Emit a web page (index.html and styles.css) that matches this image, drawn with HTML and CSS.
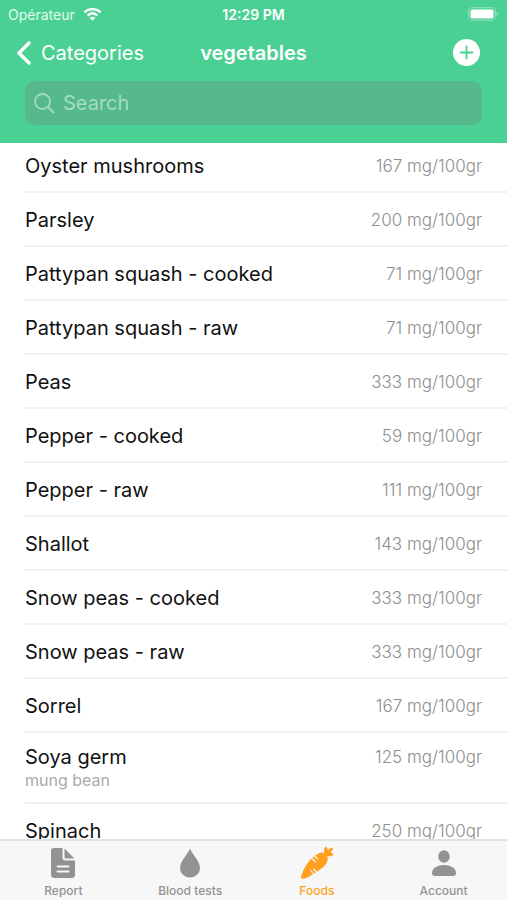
FILE: index.html
```
<!DOCTYPE html>
<html lang="en">
<head>
    <meta charset="UTF-8">
    <meta name="viewport" content="width=device-width, initial-scale=1.0">
    <title>vegetables</title>
    <link rel="stylesheet" href="styles.css">
</head>
<body>
    <div class="app">
        <header class="header">
            <div class="status-bar">
                <div class="carrier">
                    <span>Opérateur</span>
                    <svg class="wifi" viewBox="0 0 20 14" aria-hidden="true">
                        <path d="M1.500 5.200C6 0.800 14 0.800 18.500 5.200M4.800 8.600C8 5.800 12 5.800 15.200 8.600" fill="none" stroke="currentColor" stroke-width="2.500"/>
                        <path d="M10 14L7 11C8.700 9.600 11.300 9.600 13 11Z" fill="currentColor"/>
                    </svg>
                </div>
                <span class="clock">12:29 PM</span>
                <svg class="battery" viewBox="0 0 31 14" aria-hidden="true">
                    <rect x="0.700" y="0.700" width="26.600" height="12.600" rx="4" fill="none" stroke="#fff" stroke-opacity="0.350" stroke-width="1.300"/>
                    <rect x="2.500" y="2.500" width="23" height="9" rx="2" fill="#fff"/>
                    <path d="M28.500 5v4c2-.7 2-3.300 0-4z" fill="#fff" fill-opacity="0.400"/>
                </svg>
            </div>

            <nav class="nav-bar">
                <a href="#" class="back">
                    <svg class="chevron" viewBox="0 0 14 24" aria-hidden="true">
                        <path d="M12 2L2 12L12 22" fill="none" stroke="currentColor" stroke-width="3.300" stroke-linecap="round" stroke-linejoin="round"/>
                    </svg>
                    <span>Categories</span>
                </a>
                <h1 class="title">vegetables</h1>
                <button class="add-btn" type="button" aria-label="Add">
                    <svg viewBox="0 0 27 27" aria-hidden="true">
                        <circle cx="13.500" cy="13.500" r="13.500" fill="#fff"/>
                        <path d="M13.500 7.500v12M7.500 13.500h12" stroke="#4bd093" stroke-width="1.800" stroke-linecap="round"/>
                    </svg>
                </button>
            </nav>

            <label class="search">
                <svg class="search-icon" viewBox="0 0 21 21" aria-hidden="true">
                    <path d="M14 14L19.500 19.500" stroke="currentColor" stroke-width="2" stroke-linecap="round"/>
                    <circle cx="8.500" cy="8.500" r="7.500" fill="none" stroke="currentColor" stroke-width="1.800"/>
                </svg>
                <input type="search" class="search-input" placeholder="Search" aria-label="Search">
            </label>
        </header>

        <main class="content">
            <ul class="food-list">
                <li class="food"><span class="name">Oyster mushrooms</span><span class="amount">167 mg/100gr</span></li>
                <li class="food"><span class="name">Parsley</span><span class="amount">200 mg/100gr</span></li>
                <li class="food"><span class="name">Pattypan squash - cooked</span><span class="amount">71 mg/100gr</span></li>
                <li class="food"><span class="name">Pattypan squash - raw</span><span class="amount">71 mg/100gr</span></li>
                <li class="food"><span class="name">Peas</span><span class="amount">333 mg/100gr</span></li>
                <li class="food"><span class="name">Pepper - cooked</span><span class="amount">59 mg/100gr</span></li>
                <li class="food"><span class="name">Pepper - raw</span><span class="amount">111 mg/100gr</span></li>
                <li class="food"><span class="name">Shallot</span><span class="amount">143 mg/100gr</span></li>
                <li class="food"><span class="name">Snow peas - cooked</span><span class="amount">333 mg/100gr</span></li>
                <li class="food"><span class="name">Snow peas - raw</span><span class="amount">333 mg/100gr</span></li>
                <li class="food"><span class="name">Sorrel</span><span class="amount">167 mg/100gr</span></li>
                <li class="food with-note">
                    <div>
                        <div class="name">Soya germ</div>
                        <div class="note">mung bean</div>
                    </div>
                    <span class="amount">125 mg/100gr</span>
                </li>
                <li class="food"><span class="name">Spinach</span><span class="amount">250 mg/100gr</span></li>
            </ul>
        </main>

        <nav class="tab-bar">
            <a href="#" class="tab">
                <svg class="tab-icon" viewBox="0 0 34 34" aria-hidden="true">
                    <path d="M8 2h8.500v9.500a3 3 0 0 0 3 3H29V28.500a3.500 3.500 0 0 1-3.500 3.500H8.500A3.500 3.500 0 0 1 5 28.500V5a3 3 0 0 1 3-3z" fill="currentColor"/>
                    <path d="M18.500 2.500L28.500 12.500h-8.500a1.500 1.500 0 0 1-1.500-1.500z" fill="currentColor"/>
                    <path d="M11.500 20.500h11M11.500 25.500h11" stroke="#f7f7f7" stroke-width="1.800" stroke-linecap="round"/>
                </svg>
                <span>Report</span>
            </a>
            <a href="#" class="tab">
                <svg class="tab-icon" viewBox="0 0 34 34" aria-hidden="true">
                    <path d="M17 2.500C19.500 9 27 15 27 22a10 9.500 0 0 1-20 0C7 15 14.500 9 17 2.500z" fill="currentColor"/>
                </svg>
                <span>Blood tests</span>
            </a>
            <a href="#" class="tab active">
                <svg class="tab-icon" viewBox="0 0 34 34" aria-hidden="true">
                    <path d="M1.200 30.500C2.500 25.500 5 20.500 8 16.500C10.500 13 15 9 19 7.200C20.800 6.300 22.600 6.400 24.200 7.400C23.600 4.800 24 2.400 25.500.5C27 1.500 27.800 2.800 27.800 4.600C29 2.600 30.800 1.500 33 1.700C33 3.500 32 5.300 30.200 6.300C31.900 6.400 33 7.200 33.500 8.700C31.500 10.200 29.200 10.500 27 10C28 11.700 28 13.700 27.300 15.500C26 19 22.500 22 18.500 24.500C14.500 27.500 9 31 4 32.800C2.200 33.400.7 32.300 1.200 30.500z" fill="currentColor"/>
                    <path d="M11 11.500L15.500 16M14 9.500L17.500 13M10.500 24L14.500 29M13.500 23L17.500 27" stroke="#f7f7f7" stroke-width="1.100" stroke-linecap="round"/>
                </svg>
                <span>Foods</span>
            </a>
            <a href="#" class="tab">
                <svg class="tab-icon" viewBox="0 0 34 34" aria-hidden="true">
                    <ellipse cx="17" cy="10.500" rx="5.700" ry="6.200" fill="currentColor"/>
                    <path d="M5 27C5 22 10.500 19 17 19s12 3 12 8c0 2-1 3-3 3H8c-2 0-3-1-3-3z" fill="currentColor"/>
                </svg>
                <span>Account</span>
            </a>
        </nav>
    </div>
</body>
</html>
```
FILE: styles.css
```
* {
    box-sizing: border-box;
}
body {
    margin: 0;
    font-family: Inter, 'Liberation Sans', sans-serif;
    background-color: #ffffff;
    color: #111111;
}
a {
    color: inherit;
    text-decoration: none;
}
.app {
    display: flex;
    flex-direction: column;
    height: 100vh;
}
.header {
    flex: none;
    background-color: #4bd093;
    color: #ffffff;
    padding-bottom: 18px;
}

/* Status bar */
.status-bar {
    display: grid;
    grid-template-columns: 1fr auto 1fr;
    align-items: center;
    height: 28px;
    padding: 0 8px;
    font-size: 14px;
}
.carrier {
    display: flex;
    align-items: center;
    gap: 8px;
    color: #e2fbef;
}
.wifi {
    width: 19px;
    height: 14px;
    color: #ffffff;
}
.clock {
    font-weight: 600;
}
.battery {
    width: 31px;
    height: 14px;
    justify-self: end;
}

/* Navigation */
.nav-bar {
    display: grid;
    grid-template-columns: 1fr auto 1fr;
    align-items: center;
    height: 49px;
    padding: 0 17px;
}
.back {
    display: flex;
    align-items: center;
    gap: 10px;
    font-size: 20px;
}
.chevron {
    width: 14px;
    height: 24px;
}
.title {
    margin: 0;
    font-size: 20px;
    font-weight: 600;
}
.add-btn {
    width: 27px;
    height: 27px;
    margin-right: 10px;
    padding: 0;
    border: none;
    background: none;
    justify-self: end;
    cursor: pointer;
}
.add-btn svg {
    display: block;
}
.search {
    display: flex;
    align-items: center;
    gap: 8px;
    height: 44px;
    margin: 4px 25px 0;
    padding: 0 9px;
    border-radius: 10px;
    background-color: #56b98e;
    color: #a3dcc2;
}
.search-icon {
    width: 21px;
    height: 21px;
}
.search-input {
    flex: 1;
    min-width: 0;
    padding: 0;
    border: none;
    outline: none;
    background: none;
    color: #ffffff;
    font-family: inherit;
    font-size: 20px;
}
.search-input::placeholder {
    color: #a3dcc2;
}

/* Food list */
.content {
    flex: 1;
    min-height: 0;
    overflow-y: auto;
    scrollbar-width: none;
}
.food-list {
    list-style: none;
    margin: -4px 0 0;
    padding: 0 0 0 25px;
}
.food {
    display: flex;
    justify-content: space-between;
    align-items: center;
    min-height: 54px;
    padding: 2px 25px 0 0;
    border-bottom: 2px solid #f0f0f0;
}
.with-note {
    align-items: flex-start;
    padding: 12px 25px 11px 0;
}
.name {
    font-size: 20px;
    line-height: 24px;
}
.amount {
    font-size: 17px;
    line-height: 24px;
    font-weight: 300;
    color: #8e8e8e;
}
.note {
    font-size: 16px;
    line-height: 22px;
    color: #aaaaaa;
}

/* Tab bar */
.tab-bar {
    flex: none;
    display: flex;
    height: 61px;
    border-top: 2px solid #e2e2e2;
    background-color: #f7f7f7;
}
.tab {
    flex: 1;
    display: flex;
    flex-direction: column;
    align-items: center;
    padding-top: 5px;
    gap: 3px;
    font-size: 12px;
    line-height: 16px;
    font-weight: 500;
    color: #929292;
}
.tab-icon {
    width: 34px;
    height: 34px;
}
.active {
    color: #ffa01e;
}
```
